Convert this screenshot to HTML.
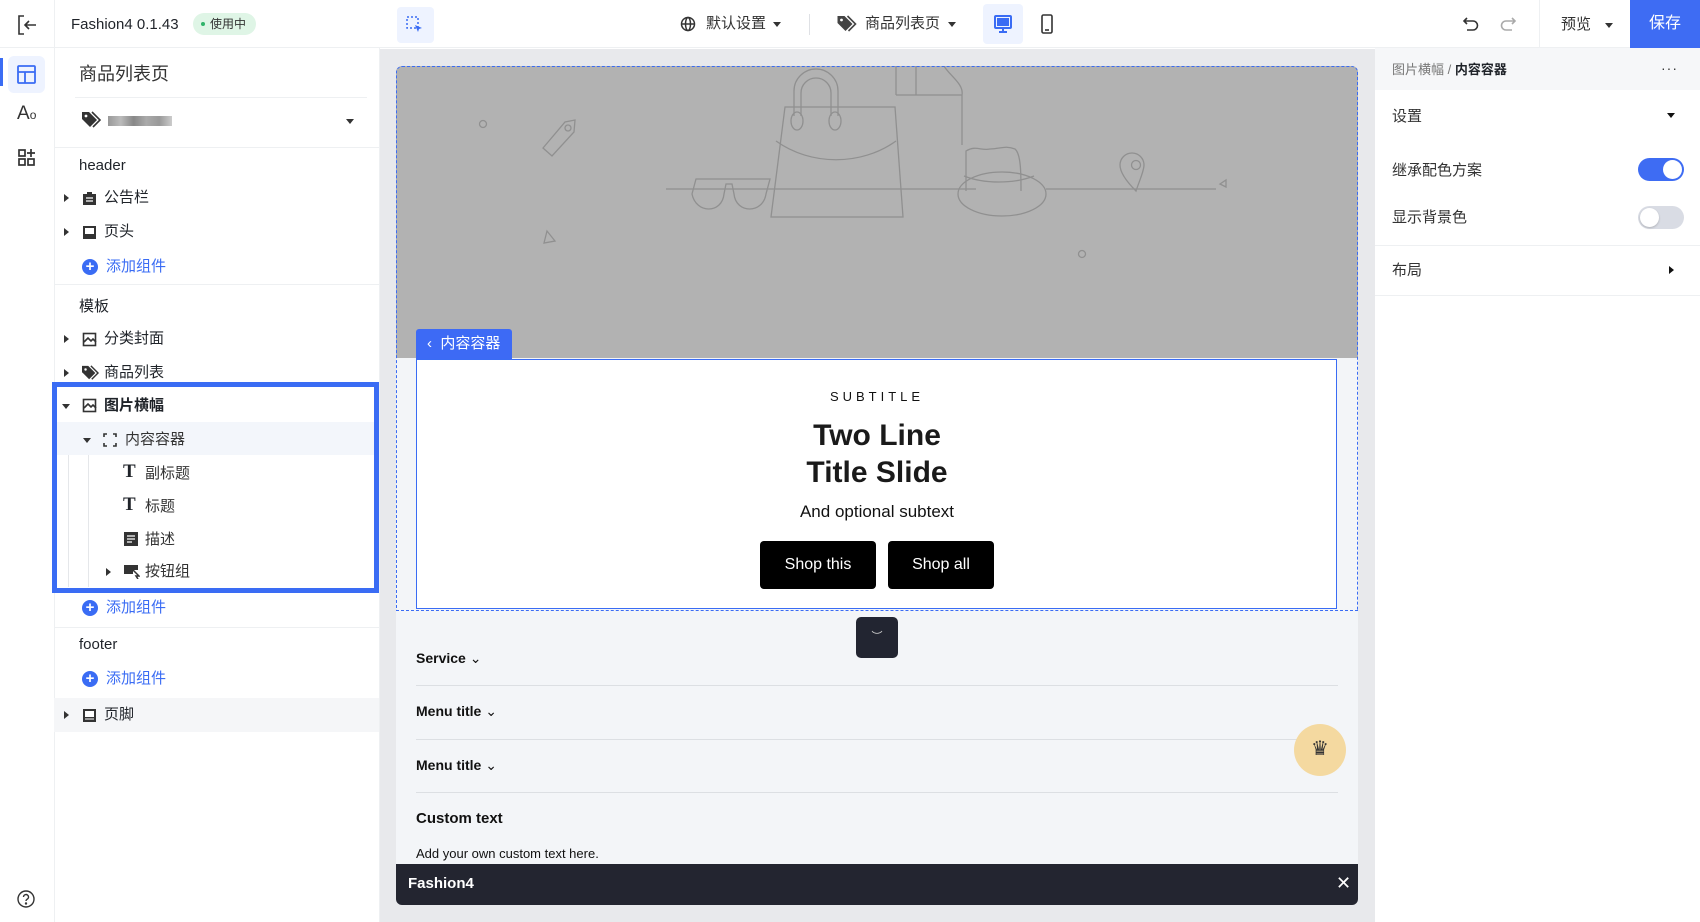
<!DOCTYPE html>
<html><head><meta charset="utf-8">
<style>
*{box-sizing:border-box;margin:0;padding:0}
body{width:1700px;height:922px;overflow:hidden;background:#fff;font-family:"Liberation Sans","Noto Sans CJK SC",sans-serif;color:#1f2329;position:relative}
.a{position:absolute}
.t{position:absolute;font-size:15px;white-space:nowrap;line-height:20px}
.tri{position:absolute;width:0;height:0;border-top:4px solid transparent;border-bottom:4px solid transparent;border-left:5px solid #333}
.trid{position:absolute;width:0;height:0;border-left:4px solid transparent;border-right:4px solid transparent;border-top:5px solid #333}
.add{color:#3a6cf4}
.plus{position:absolute;width:16px;height:16px;border-radius:50%;background:#3a6cf4;color:#fff;font-size:15px;line-height:15px;text-align:center;font-weight:bold}
.btn{position:absolute;background:#000;color:#fff;border-radius:4px;font-size:16px;text-align:center;line-height:47px}
.fl{position:absolute;left:416px;font-weight:bold;font-size:14px;color:#111}
.hl{position:absolute;left:416px;width:922px;height:1px;background:#dcdfe3}
</style></head><body>

<!-- top bar -->
<div class="a" style="left:0;top:0;width:1700px;height:48px;border-bottom:1px solid #eef0f2;background:#fff"></div>
<div class="a" style="left:54px;top:0;width:1px;height:922px;background:#eef0f2"></div>
<svg class="a" style="left:16px;top:14px" width="22" height="22" viewBox="0 0 22 22" fill="none" stroke="#333" stroke-width="1.6"><path d="M8 2H3v18h5M9 11h11M13 7l-4 4 4 4"/></svg>
<div class="t" style="left:71px;top:15px;font-size:15px;color:#1f2329">Fashion4 0.1.43</div>
<div class="a" style="left:193px;top:13px;width:63px;height:22px;border-radius:11px;background:#dff5e6;color:#333;font-size:12px;line-height:22px;padding-left:17px">使用中</div>
<div class="a" style="left:201px;top:22px;width:4px;height:4px;border-radius:50%;background:#2fb36a"></div>

<!-- left rail -->
<div class="a" style="left:0;top:58px;width:3px;height:28px;background:#3a6cf4"></div>
<div class="a" style="left:8px;top:56px;width:37px;height:37px;border-radius:6px;background:#eef3ff"></div>
<svg class="a" style="left:16px;top:64px" width="21" height="21" viewBox="0 0 21 21" fill="none" stroke="#3a6cf4" stroke-width="1.8"><rect x="2" y="2" width="17" height="17" rx="1"/><path d="M2 8h17M9 8v11"/></svg>
<div class="t" style="left:17px;top:104px;font-size:19px;color:#333">A<span style="font-size:12px">o</span></div>
<svg class="a" style="left:17px;top:148px" width="20" height="20" viewBox="0 0 20 20" fill="none" stroke="#333" stroke-width="1.7"><rect x="2" y="2" width="6" height="6"/><rect x="2" y="11" width="6" height="6"/><rect x="11" y="11" width="6" height="6"/><path d="M14 1v8M10 5h8"/></svg>
<svg class="a" style="left:16px;top:889px" width="20" height="20" viewBox="0 0 20 20" fill="none" stroke="#333" stroke-width="1.4"><circle cx="10" cy="10" r="8"/><path d="M7.5 8a2.5 2.5 0 1 1 3.5 2.3c-.7.4-1 .8-1 1.7"/><circle cx="10" cy="14.5" r=".5" fill="#333"/></svg>

<!-- left panel -->
<div class="a" style="left:379px;top:48px;width:1px;height:874px;background:#eef0f2"></div>
<div class="t" style="left:79px;top:62px;font-size:18px;line-height:24px;color:#333">商品列表页</div>
<div class="a" style="left:75px;top:97px;width:292px;height:1px;background:#eef0f2"></div>
<svg class="a" style="left:81px;top:111px" width="20" height="18" viewBox="0 0 20 18"><path d="M1 2v6l8 8 7-7-8-8H1z" fill="#333"/><circle cx="5" cy="5" r="1.4" fill="#fff"/><path d="M11 1l8 8-7 7" stroke="#333" stroke-width="1.6" fill="none"/></svg>
<div class="a" style="left:108px;top:116px;width:64px;height:10px;background:linear-gradient(90deg,#999,#bbb 20%,#888 40%,#aaa 60%,#999 80%,#ccc)"></div>
<div class="trid" style="left:346px;top:119px"></div>
<div class="a" style="left:54px;top:147px;width:325px;height:1px;background:#eef0f2"></div>

<div class="t" style="left:79px;top:156px">header</div>
<div class="tri" style="left:64px;top:194px"></div>
<svg class="a" style="left:82px;top:191px" width="15" height="15" viewBox="0 0 15 15"><path d="M5 3V1h5v2h4v11H1V3z" fill="#333"/><path d="M4 7h7M4 10h7" stroke="#fff" stroke-width="1.3"/></svg>
<div class="t" style="left:104px;top:188px">公告栏</div>
<div class="tri" style="left:64px;top:228px"></div>
<svg class="a" style="left:82px;top:225px" width="15" height="15" viewBox="0 0 15 15"><rect x="1" y="1" width="13" height="13" fill="#333"/><rect x="3" y="3" width="9" height="6" fill="#fff"/></svg>
<div class="t" style="left:104px;top:222px">页头</div>
<div class="plus" style="left:82px;top:259px">+</div>
<div class="t add" style="left:106px;top:257px">添加组件</div>
<div class="a" style="left:54px;top:284px;width:325px;height:1px;background:#eef0f2"></div>

<div class="t" style="left:79px;top:297px">模板</div>
<div class="tri" style="left:64px;top:335px"></div>
<svg class="a" style="left:82px;top:332px" width="15" height="15" viewBox="0 0 15 15" fill="none" stroke="#333" stroke-width="1.6"><rect x="1.5" y="1.5" width="12" height="12"/><path d="M2 10l4-4 3 3 2-2 3 3"/></svg>
<div class="t" style="left:104px;top:329px">分类封面</div>
<div class="tri" style="left:64px;top:369px"></div>
<svg class="a" style="left:81px;top:365px" width="18" height="16" viewBox="0 0 20 18"><path d="M1 2v6l8 8 7-7-8-8H1z" fill="#333"/><circle cx="5" cy="5" r="1.4" fill="#fff"/><path d="M11 1l8 8-7 7" stroke="#333" stroke-width="1.6" fill="none"/></svg>
<div class="t" style="left:104px;top:363px">商品列表</div>

<!-- selected block -->
<div class="a" style="left:57px;top:422px;width:318px;height:33px;background:#f3f6fb"></div>
<div class="a" style="left:68px;top:455px;width:1px;height:132px;background:#e5e7ea"></div>
<div class="a" style="left:88px;top:455px;width:1px;height:132px;background:#e5e7ea"></div>
<div class="trid" style="left:62px;top:404px"></div>
<svg class="a" style="left:82px;top:398px" width="15" height="15" viewBox="0 0 15 15" fill="none" stroke="#333" stroke-width="1.6"><rect x="1.5" y="1.5" width="12" height="12"/><path d="M2 10l4-4 3 3 2-2 3 3"/></svg>
<div class="t" style="left:104px;top:396px;font-weight:bold">图片横幅</div>
<div class="trid" style="left:83px;top:438px"></div>
<svg class="a" style="left:103px;top:433px" width="14" height="14" viewBox="0 0 14 14" fill="none" stroke="#333" stroke-width="1.6"><path d="M1 4V1h3M10 1h3v3M13 10v3h-3M4 13H1v-3"/></svg>
<div class="t" style="left:125px;top:430px;color:#333">内容容器</div>
<div class="t" style="left:123px;top:462px;font-family:'Liberation Serif',serif;font-weight:bold;font-size:19px">T</div>
<div class="t" style="left:145px;top:464px;color:#333">副标题</div>
<div class="t" style="left:123px;top:495px;font-family:'Liberation Serif',serif;font-weight:bold;font-size:19px">T</div>
<div class="t" style="left:145px;top:497px;color:#333">标题</div>
<svg class="a" style="left:124px;top:532px" width="14" height="14" viewBox="0 0 14 14"><rect width="14" height="14" fill="#333"/><path d="M3 4h8M3 7h8M3 10h5" stroke="#fff" stroke-width="1.3"/></svg>
<div class="t" style="left:145px;top:530px;color:#333">描述</div>
<div class="tri" style="left:106px;top:568px"></div>
<svg class="a" style="left:124px;top:564px" width="16" height="15" viewBox="0 0 16 15"><path d="M0 1h14v5h-5v4H0z" fill="#333"/><path d="M9 6l6 6-3 0 2 3" stroke="#333" stroke-width="1.5" fill="none"/></svg>
<div class="t" style="left:145px;top:562px;color:#333">按钮组</div>
<div class="a" style="left:52px;top:382px;width:327px;height:211px;border:5px solid #3a6cf4"></div>

<div class="plus" style="left:82px;top:600px">+</div>
<div class="t add" style="left:106px;top:598px">添加组件</div>
<div class="a" style="left:54px;top:627px;width:325px;height:1px;background:#eef0f2"></div>
<div class="t" style="left:79px;top:635px">footer</div>
<div class="plus" style="left:82px;top:671px">+</div>
<div class="t add" style="left:106px;top:669px">添加组件</div>
<div class="a" style="left:54px;top:698px;width:325px;height:34px;background:#f5f6f8"></div>
<div class="tri" style="left:64px;top:711px"></div>
<svg class="a" style="left:82px;top:708px" width="15" height="15" viewBox="0 0 15 15"><rect x="1" y="1" width="13" height="13" fill="#333"/><rect x="3" y="3" width="9" height="6" fill="#fff"/><path d="M3 11h9" stroke="#fff"/></svg>
<div class="t" style="left:104px;top:705px">页脚</div>

<!-- top center controls -->
<div class="a" style="left:397px;top:7px;width:37px;height:36px;border-radius:4px;background:#eef3ff"></div>
<svg class="a" style="left:406px;top:16px" width="18" height="18" viewBox="0 0 18 18" fill="none"><rect x="1" y="1" width="11" height="11" stroke="#3a6cf4" stroke-width="1.5" stroke-dasharray="2 2"/><path d="M9 9l7 3-3 1-1 3z" fill="#3a6cf4"/></svg>
<svg class="a" style="left:680px;top:16px" width="16" height="16" viewBox="0 0 16 16" fill="none" stroke="#333" stroke-width="1.5"><circle cx="8" cy="8" r="6.5"/><ellipse cx="8" cy="8" rx="2.5" ry="6.5"/><path d="M1.5 8h13"/></svg>
<div class="t" style="left:706px;top:14px;color:#333">默认设置</div>
<div class="trid" style="left:773px;top:22px"></div>
<div class="a" style="left:809px;top:14px;width:1px;height:21px;background:#dfe1e5"></div>
<svg class="a" style="left:836px;top:15px" width="21" height="18" viewBox="0 0 20 18"><path d="M1 2v6l8 8 7-7-8-8H1z" fill="#444"/><circle cx="5" cy="5" r="1.4" fill="#fff"/><path d="M11 1l8 8-7 7" stroke="#444" stroke-width="1.6" fill="none"/></svg>
<div class="t" style="left:865px;top:14px;color:#333">商品列表页</div>
<div class="trid" style="left:948px;top:22px"></div>
<div class="a" style="left:983px;top:4px;width:40px;height:40px;border-radius:4px;background:#eef3ff"></div>
<svg class="a" style="left:993px;top:14px" width="20" height="20" viewBox="0 0 20 20"><rect x="2" y="2" width="16" height="12" rx="1" fill="none" stroke="#3a6cf4" stroke-width="2"/><rect x="4" y="4" width="12" height="8" fill="#3a6cf4"/><path d="M10 14v4M6 18h8" stroke="#3a6cf4" stroke-width="2"/></svg>
<svg class="a" style="left:1040px;top:14px" width="14" height="20" viewBox="0 0 14 20" fill="none" stroke="#333" stroke-width="1.6"><rect x="2" y="1" width="10" height="18" rx="1.5"/><path d="M5 16h4"/></svg>
<svg class="a" style="left:1462px;top:15px" width="18" height="18" viewBox="0 0 18 18" fill="none" stroke="#333" stroke-width="1.6"><path d="M5 3L2 6l3 3M2 6h9a4.5 4.5 0 0 1 0 9H5"/></svg>
<svg class="a" style="left:1499px;top:15px" width="18" height="18" viewBox="0 0 18 18" fill="none" stroke="#aaa" stroke-width="1.6"><path d="M13 3l3 3-3 3M16 6H7a4.5 4.5 0 0 0 0 9h6"/></svg>
<div class="a" style="left:1539px;top:0;width:1px;height:48px;background:#eef0f2"></div>
<div class="t" style="left:1561px;top:15px;color:#333">预览</div>
<div class="trid" style="left:1605px;top:23px"></div>
<div class="a" style="left:1630px;top:0;width:70px;height:48px;background:#3e6cf3;color:#fff;font-size:16px;line-height:48px;text-align:center">保存</div>

<!-- canvas -->
<div class="a" style="left:380px;top:49px;width:995px;height:873px;background:#e8e9ec"></div>
<div class="a" style="left:396px;top:66px;width:962px;height:839px;border-radius:6px;overflow:hidden;background:#f3f5f8">
  <div class="a" style="left:0;top:0;width:962px;height:292px;background:#b2b2b2"></div>
  <svg class="a" style="left:0;top:0" width="962" height="292" viewBox="0 0 962 292" fill="none" stroke="#909090" stroke-width="1.3">
    <path d="M270 123h310M650 123h170"/>
    <path d="M389 41h110l8 110H375z"/><path d="M380 75c35 25 85 25 120 0"/>
    <path d="M398 50V25a22 22 0 0 1 44 0v25"/><path d="M405 50V27a15 15 0 0 1 30 0v23"/>
    <ellipse cx="401" cy="55" rx="6" ry="9"/><ellipse cx="439" cy="55" rx="6" ry="9"/>
    <path d="M500 29h66v50M500 29V0M520 29V0M548 0c6 10 20 18 18 29"/>
    <path d="M300 113h74l-4 15c-3 20-30 20-32 0l-2-10h-6l-2 10c-2 20-28 20-32 0z"/>
    <ellipse cx="606" cy="128" rx="44" ry="22"/><path d="M570 125v-40c10-6 15 0 24-2 10 0 15-4 25 0 6 5 6 25 6 42"/><path d="M568 110c20 8 50 8 70 0"/>
    <path d="M147 82l22-26 10-2-1 12-22 24z"/><circle cx="172" cy="62" r="3"/>
    <path d="M151 165l-3 12 11-2z"/><circle cx="87" cy="58" r="3.5"/><circle cx="686" cy="188" r="3.5"/>
    <path d="M740 125c-12-12-16-20-16-26a12 12 0 0 1 24 0c0 6-4 14-8 26z"/><circle cx="740" cy="99" r="4.5"/>
    <path d="M830 121l-6-3 6-4z"/>
  </svg>
  <div class="a" style="left:0;top:0;width:962px;height:545px;border:1.5px dashed #3a6cf4;border-radius:6px 6px 0 0"></div>
  <div class="a" style="left:20px;top:263px;width:96px;height:30px;background:#3d6af5;border-radius:3px 3px 0 0;color:#fff;font-size:15px;line-height:30px;padding-left:11px">‹&nbsp; 内容容器</div>
  <div class="a" style="left:20px;top:293px;width:921px;height:250px;background:#fff;border:1.5px solid #3a6cf4"></div>
  <div class="t" style="left:0;width:962px;text-align:center;top:321px;font-size:13px;letter-spacing:4px;color:#111">SUBTITLE</div>
  <div class="t" style="left:0;width:962px;text-align:center;top:351px;font-size:30px;line-height:37px;font-weight:bold;color:#1a1a1a">Two Line<br>Title Slide</div>
  <div class="t" style="left:0;width:962px;text-align:center;top:436px;font-size:17px;color:#111">And optional subtext</div>
  <div class="btn" style="left:364px;top:475px;width:116px;height:48px">Shop this</div>
  <div class="btn" style="left:492px;top:475px;width:106px;height:48px">Shop all</div>
  <div class="a" style="left:460px;top:551px;width:42px;height:41px;border-radius:5px;background:#222531;color:#ccc;text-align:center;font-size:11px;line-height:41px">︶</div>
</div>
<div class="fl" style="top:650px">Service <span style="font-weight:normal">⌄</span></div>
<div class="hl" style="top:685px"></div>
<div class="fl" style="top:703px">Menu title <span style="font-weight:normal">⌄</span></div>
<div class="hl" style="top:739px"></div>
<div class="fl" style="top:757px">Menu title <span style="font-weight:normal">⌄</span></div>
<div class="hl" style="top:792px"></div>
<div class="fl" style="top:810px;font-size:15px">Custom text</div>
<div class="fl" style="top:846px;font-weight:normal;font-size:13px">Add your own custom text here.</div>
<div class="a" style="left:1294px;top:724px;width:52px;height:52px;border-radius:50%;background:#f4d9a0;color:#333;text-align:center;line-height:50px;font-size:20px">♛</div>
<div class="a" style="left:396px;top:864px;width:962px;height:41px;background:#232530;border-radius:0 0 6px 6px"></div>
<div class="t" style="left:408px;top:874px;color:#fff;font-weight:bold;font-size:15px">Fashion4</div>
<div class="t" style="left:1336px;top:873px;color:#fff;font-size:18px">✕</div>

<!-- right panel -->
<div class="a" style="left:1375px;top:48px;width:325px;height:42px;background:#f6f7f9"></div>
<div class="t" style="left:1392px;top:60px;font-size:13px;color:#777">图片横幅 / <b style="color:#1f2329">内容容器</b></div>
<div class="t" style="left:1661px;top:58px;font-size:14px;color:#333;letter-spacing:1px">···</div>
<div class="t" style="left:1392px;top:107px;color:#333">设置</div>
<div class="trid" style="left:1667px;top:113px;border-top-color:#111"></div>
<div class="t" style="left:1392px;top:161px;color:#333">继承配色方案</div>
<div class="a" style="left:1638px;top:158px;width:46px;height:23px;border-radius:12px;background:#3e6cf3"></div>
<div class="a" style="left:1663px;top:160px;width:19px;height:19px;border-radius:50%;background:#fff"></div>
<div class="t" style="left:1392px;top:208px;color:#333">显示背景色</div>
<div class="a" style="left:1638px;top:206px;width:46px;height:23px;border-radius:12px;background:#d9dce4"></div>
<div class="a" style="left:1640px;top:208px;width:19px;height:19px;border-radius:50%;background:#fff;box-shadow:0 1px 2px rgba(0,0,0,.2)"></div>
<div class="a" style="left:1375px;top:245px;width:325px;height:1px;background:#eef0f2"></div>
<div class="t" style="left:1392px;top:261px;color:#333">布局</div>
<div class="tri" style="left:1669px;top:266px;border-left-color:#111"></div>
<div class="a" style="left:1375px;top:295px;width:325px;height:1px;background:#eef0f2"></div>
</body></html>
